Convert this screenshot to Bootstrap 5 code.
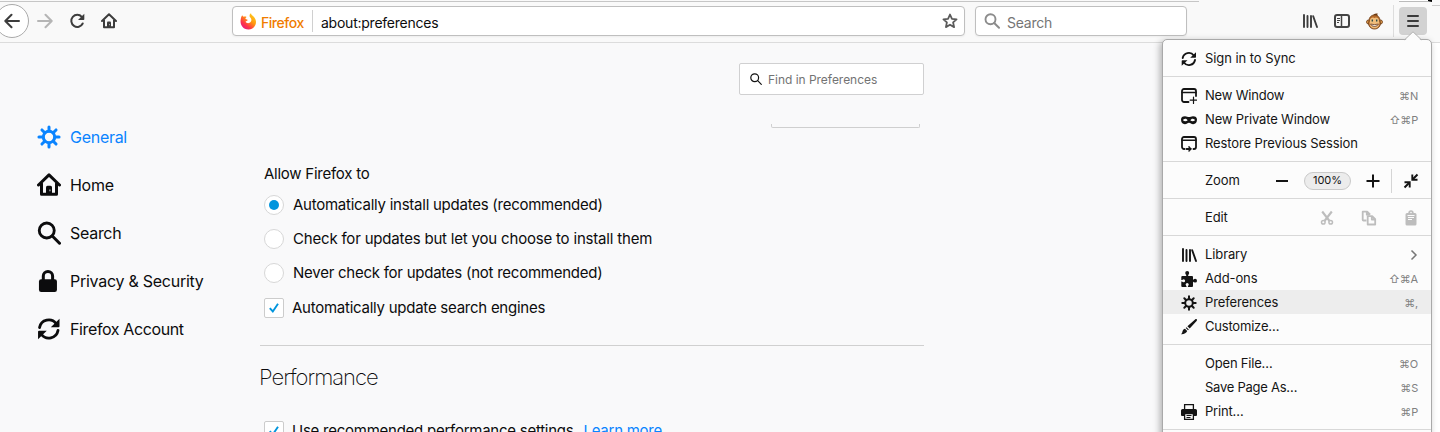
<!DOCTYPE html>
<html lang="en">
<head>
<meta charset="utf-8">
<title>Preferences</title>
<link href="https://cdn.jsdelivr.net/npm/bootstrap@5.3.0/dist/css/bootstrap.min.css" rel="stylesheet">
<script src="https://cdn.jsdelivr.net/npm/bootstrap@5.3.0/dist/js/bootstrap.bundle.min.js"></script>
<style>
html,body{height:432px;overflow:hidden}
body{font-family:Inter,"Liberation Sans",sans-serif;background:#f9f9fa;color:#0c0c0d;position:relative}
svg{display:block;flex:none}
.toolbar{height:43px;background:#f9f9f9;border-bottom:1px solid #dcdcdc;font-size:14px;letter-spacing:-.24px}
.topline{position:absolute;left:0;top:1px;width:1199px;height:1px;background:#c6c6c6}
.tab-end{position:absolute;left:1399px;top:0;width:33px;height:2px;background:#fff;border-bottom:1px solid #bbb;border-right:4px solid #000}
.back{width:34px;height:34px;border:1px solid #aaa;border-radius:50%;background:#fff;margin-left:-5px}
.tool{width:16px;height:16px;margin-left:16px;color:#3d3d3d}
.field{height:30px;background:#fff;border:1px solid #bfbfbf;border-radius:4px;box-shadow:0 1px 2px rgba(0,0,0,.05)}
.field>span{padding-top:2px}
.address{width:733px;margin-left:115px;padding:0 6px 0 7px}
.identity{width:51px;margin-left:4px;color:#f07c00;font-weight:500;letter-spacing:-.46px}
.searchbar{width:212px;margin-left:10px;padding-left:8px;gap:7px;color:#757575}
.menubtn{width:28px;height:28px;border-radius:4px;background:#d2d2d2;color:#3b3b3b}
.side{width:260px;padding:70px 0 0 37px}
.cat{height:48px;font-size:16px;gap:9px;letter-spacing:-.28px}
.cat svg{width:24px;height:24px}
.cat.active{color:#0a84ff}
.main{width:664px;padding-top:20px;font-size:15px;letter-spacing:-.25px}
.find{width:185px;height:32px;border:1px solid #d0d0d1;border-radius:2px;background:#fff;font-size:12px;color:#737373;padding-left:10px;gap:6px;letter-spacing:-.03px}
.stub{width:149px;height:4px;border:1px solid #cfcfcf;border-top:0;border-radius:0 0 2px 2px;margin:29px 4px 0 0}
.opt{height:34px;gap:9px}
.opt.check{gap:8px}
.rad{width:20px;height:20px;border:1px solid #d7d7d7;border-radius:50%;background:#fff}
.rad.on::after{content:"";width:10.5px;height:10.5px;border-radius:50%;background:#0095dd}
.chk{width:20px;height:20px;border:1px solid #ccc;border-radius:2px;background:#fff}
.perf{font-size:22px;font-weight:200;letter-spacing:-1px;margin:15px 0 0 -1px}
.panel{position:absolute;left:1162px;top:39px;width:270px;height:420px;background:#fcfcfc;border:1px solid #a9a9a9;border-radius:5px;font-size:13px;letter-spacing:-.11px;color:#141414;box-shadow:-2px 2px 7px rgba(0,0,0,.3)}
.arrow{position:absolute;left:1402px;top:31px}
.group{padding:6px 0;border-bottom:1px solid #d8d8d8}
.item{height:24px;padding:2px 13px 0 18px;gap:8px}
.item>.ic{margin-top:-1px}
.item.hot{background:#ededed}
.key{font-size:11px;color:#808080;margin-left:auto;letter-spacing:-.2px}
.ic{width:16px;height:16px}
.tools{margin:-1px -1px 0 auto}
.pill{width:47px;height:18px;border:1px solid #c9c9c9;border-radius:9px;background:#ececec;font-size:11px;letter-spacing:-.1px}
.edge{position:absolute;left:1432px;top:5px;width:8px;height:427px;background:linear-gradient(#f9f9f9 0 36px,#fff 36px);border-top:1px solid #ccc}
.edge::before{content:"";display:block;height:1px;margin-top:36px;background:#dcdcdc}
</style>
</head>
<body>
<svg width="0" height="0" class="position-absolute"><defs>
<symbol id="sync" viewBox="0 0 16 16"><path d="M1.700 7A6.200 6.200 0 0 1 12.800 4.500M14 9A6.200 6.200 0 0 1 2.900 11.500" fill="none" stroke="currentColor" stroke-width="1.900" stroke-linecap="round"/><path d="M15 1.200v4.900a.7.7 0 0 1-.7.7H9.200zM.7 14.800V9.900a.7.7 0 0 1 .7-.7h5.100z" fill="currentColor"/></symbol>
<symbol id="house" viewBox="0 0 16 16"><path d="M1 8l7-6.700L15 8M3 7v7.200h10V7" fill="none" stroke="currentColor" stroke-width="2" stroke-linejoin="round" stroke-linecap="round"/><path d="M6 14V9.500a1 1 0 0 1 1-1h2a1 1 0 0 1 1 1V14z" fill="currentColor"/><path d="M8.200 11h.8v1.200h-.8z" fill="#bbb"/></symbol>
<symbol id="lens" viewBox="0 0 16 16"><circle cx="6.500" cy="6.300" r="5" fill="none" stroke="currentColor" stroke-width="1.900"/><path d="M10.200 10l4.800 4.800" stroke="currentColor" stroke-width="2" stroke-linecap="round"/></symbol>
<symbol id="gear" viewBox="0 0 16 16"><circle cx="8" cy="8" r="3.800" fill="none" stroke="currentColor" stroke-width="2"/><path d="M8 1.300v2.700M8 12v2.700M1.300 8h2.700M12 8h2.700M3.300 3.300l1.700 1.700M11 11l1.700 1.700M3.300 12.700L5 11M11 5l1.700-1.700" stroke="currentColor" stroke-width="2" stroke-linecap="round"/></symbol>
<symbol id="books" viewBox="0 0 16 16"><path d="M2 2v12M5.500 3v11M9 3v11M11.200 3.200l3.800 10.800" stroke="currentColor" stroke-width="1.900" stroke-linecap="round" fill="none"/></symbol>
<symbol id="tick" viewBox="0 0 18 18"><path d="M4.800 9.200l3 3.300 5.200-7.800" fill="none" stroke="#0095dd" stroke-width="1.900"/></symbol>
</defs></svg>

<nav class="toolbar d-flex align-items-center">
 <div class="back d-flex align-items-center justify-content-center"><svg width="16" height="16" viewBox="0 0 16 16" fill="none" stroke="#3d3d3d" stroke-width="2" stroke-linecap="round" stroke-linejoin="round"><path d="M15 8H1.500M7.500 1.800L1.300 8l6.200 6.200"/></svg></div>
 <svg class="ms-2" width="16" height="16" viewBox="0 0 16 16" fill="none" stroke="#b5b5b5" stroke-width="2" stroke-linecap="round" stroke-linejoin="round"><path d="M1 8h13.500M8.500 1.800L14.700 8l-6.200 6.200"/></svg>
 <svg class="tool" viewBox="0 0 16 16"><path d="M12.800 3.900A6 6 0 1 0 13.700 10.500" fill="none" stroke="#3d3d3d" stroke-width="2" stroke-linecap="round"/><path d="M15.300.8v5.500a.7.7 0 0 1-.7.7H9z" fill="#3d3d3d"/></svg>
 <svg class="tool"><use href="#house"/></svg>
 <div class="field address d-flex align-items-center">
  <svg width="17" height="17" viewBox="0 0 17 17"><defs><linearGradient id="fx" x1="1" y1="0" x2=".2" y2="1"><stop offset="0" stop-color="#ffe226"/><stop offset=".45" stop-color="#ff980e"/><stop offset=".75" stop-color="#ff3647"/><stop offset="1" stop-color="#e31587"/></linearGradient></defs><path d="M2.200 2.200c.3.900.9 1.400 1.600 1.600.9-.4 2-.3 2.800.2-.9.500-1.300 1.200-1 2.100 1 .3 2 .4 2.200 1-.4 1-1.600 1-2.200 1.500.5 1.500 2.400 2 4 1.200 2.300-1.300 2.400-4 .3-5.800C9.200 2.700 9.600 1 11 .3c.2 1.700 1.700 2.500 3 3.700 4 4.300 1.800 12-5.200 12.500C2.300 16.700-.2 11 .7 6.500c.2-1.600.6-3 1.500-4.300z" fill="url(#fx)"/></svg>
  <span class="identity">Firefox</span>
  <div style="width:1px;height:22px;background:#d0d0d0;margin-right:8px"></div>
  <span>about:preferences</span>
  <svg class="ms-auto" width="16" height="16" viewBox="0 0 16 16"><path d="M8 1.500l1.950 4.300 4.600.5-3.450 3.100 1 4.700L8 11.700l-4.100 2.400 1-4.700L1.450 6.300l4.600-.5z" fill="none" stroke="#5a5a5a" stroke-width="1.800" stroke-linejoin="round"/></svg>
 </div>
 <div class="field searchbar d-flex align-items-center"><svg width="16" height="16" style="color:#8c8c8c"><use href="#lens"/></svg><span>Search</span></div>
 <svg class="tool" style="margin-left:115px"><use href="#books"/></svg>
 <svg class="tool" viewBox="0 0 16 16" fill="none" stroke="#444"><rect x="1" y="2" width="14" height="12" rx="2" stroke-width="2"/><path d="M7.500 2v12" stroke-width="1.500"/><path d="M3 5.500h3M3 7.500h3M3 9.500h2" stroke-width="1"/></svg>
 <svg style="margin-left:16px" width="17" height="17" viewBox="0 0 17 17"><path d="M7 3C7 1 9.500 0 12 .8 11 1 11 1.500 12 2.500z" fill="#6b3a12"/><circle cx="2.500" cy="9" r="2" fill="#dd9a4e" stroke="#6b3a12" stroke-width=".8"/><circle cx="14.500" cy="9" r="2" fill="#dd9a4e" stroke="#6b3a12" stroke-width=".8"/><path d="M8.500 2C12 2 14 4.500 14 8c1.500 4-1 8-5.500 8S1.500 12 3 8c0-3.500 2-6 5.500-6z" fill="#b56a2a" stroke="#6b3a12" stroke-width=".8"/><path d="M8.500 5C10 3.500 13.500 5 13 8.500c1.300 3-.7 6.800-4.500 6.800s-5.800-3.800-4.500-6.800C3.500 5 7 3.500 8.500 5z" fill="#f0be7c"/><path d="M6.300 6.500v2M10.700 6.500v2" stroke="#2d4b45" stroke-width="1.400"/><path d="M4.500 11q4 1.300 8 0-1 2.500-4 2.500T4.500 11z" fill="#f3efe6" stroke="#5a2a12" stroke-width=".7"/></svg>
 <div style="width:1px;height:32px;background:#ddd;margin:0 5px 0 10px"></div>
 <div class="menubtn d-flex align-items-center justify-content-center"><svg width="14" height="14" viewBox="0 0 14 14" stroke="currentColor" stroke-width="2" stroke-linecap="round"><path d="M2 2h10M2 7h10M2 12h10"/></svg></div>
</nav>
<div class="topline"></div>
<div class="tab-end"></div>

<div class="d-flex">
 <aside class="side">
  <div class="cat active d-flex align-items-center"><svg><use href="#gear"/></svg><span>General</span></div>
  <div class="cat d-flex align-items-center"><svg><use href="#house"/></svg><span>Home</span></div>
  <div class="cat d-flex align-items-center"><svg><use href="#lens"/></svg><span>Search</span></div>
  <div class="cat d-flex align-items-center"><svg viewBox="0 0 16 16"><path d="M4.200 8V4.700a3.100 3.100 0 0 1 6.200 0V8" fill="none" stroke="currentColor" stroke-width="2"/><rect x="1.300" y="6.900" width="12" height="8.400" rx="1.500" fill="currentColor"/></svg><span style="letter-spacing:-.26px">Privacy &amp; Security</span></div>
  <div class="cat d-flex align-items-center"><svg><use href="#sync"/></svg><span style="letter-spacing:-.38px">Firefox Account</span></div>
 </aside>
 <main class="main">
  <div class="find d-flex align-items-center ms-auto"><svg width="12" height="12" viewBox="0 0 12 12" fill="none" stroke="#111" stroke-width="1.200" stroke-linecap="round"><circle cx="4.700" cy="4.700" r="3.900"/><path d="M7.700 7.700l3.600 3.600"/></svg><span style="padding-top:1px">Find in Preferences</span></div>
  <div class="stub ms-auto"></div>
  <div class="d-flex align-items-center" style="margin-top:34px;height:24px;padding-left:4px">Allow Firefox to</div>
  <div style="padding:2px 0 0 4px">
   <div class="opt d-flex align-items-center"><span class="rad on d-flex align-items-center justify-content-center"></span><span>Automatically install updates (recommended)</span></div>
   <div class="opt d-flex align-items-center"><span class="rad"></span><span style="letter-spacing:-.19px">Check for updates but let you choose to install them</span></div>
   <div class="opt d-flex align-items-center"><span class="rad"></span><span>Never check for updates (not recommended)</span></div>
   <div class="opt check d-flex align-items-center" style="margin-top:1px"><span class="chk"><svg width="18" height="18"><use href="#tick"/></svg></span><span>Automatically update search engines</span></div>
  </div>
  <div style="height:1px;background:#d0d0d0;margin-top:20px"></div>
  <div class="perf">Performance</div>
  <div class="opt check d-flex align-items-center" style="padding-left:4px;margin-top:20px"><span class="chk"><svg width="18" height="18"><use href="#tick"/></svg></span><span>Use recommended performance settings</span><span style="color:#0a84ff;margin-left:2px">Learn more</span></div>
 </main>
</div>

<div class="edge"></div>
<div class="panel">
 <div class="group"><div class="item d-flex align-items-center"><svg class="ic"><use href="#sync"/></svg><span style="letter-spacing:-.06px">Sign in to Sync</span></div></div>
 <div class="group">
  <div class="item d-flex align-items-center"><svg class="ic" viewBox="0 0 16 16" fill="none" stroke="currentColor" stroke-linecap="round"><path d="M7.500 14H3a2 2 0 0 1-2-2V3a2 2 0 0 1 2-2h10a2 2 0 0 1 2 2v5" stroke-width="1.800"/><path d="M1 4.500h14" stroke-width="1.500"/><path d="M12.500 9v6.500M9.200 12.200h6.500" stroke-width="1.200"/></svg><span style="letter-spacing:-.2px">New Window</span><span class="key">⌘N</span></div>
  <div class="item d-flex align-items-center"><svg class="ic" viewBox="0 0 16 16"><path fill-rule="evenodd" d="M4 4.200c1.700 0 2.700.8 4 .8s2.300-.8 4-.8c2.600 0 4 1.200 4 3.300 0 2.800-1.500 4.700-3.800 4.700-2 0-2.700-1.400-4.200-1.400s-2.200 1.400-4.200 1.400C1.500 12.200 0 10.300 0 7.500c0-2.100 1.400-3.300 4-3.300zM4.300 6.700C3 6.700 2.200 7.500 2 8.200c.8.700 1.400 1 2.300 1s1.700-.4 2.400-1c-.6-.8-1.300-1.500-2.400-1.500zm7.400 0c-1.100 0-1.800.7-2.400 1.500.7.6 1.500 1 2.400 1s1.500-.3 2.300-1c-.2-.7-1-1.500-2.300-1.500z" fill="currentColor"/></svg><span style="letter-spacing:-.15px">New Private Window</span><span class="key">⇧⌘P</span></div>
  <div class="item d-flex align-items-center"><svg class="ic" viewBox="0 0 16 16" fill="none" stroke="currentColor" stroke-linecap="round" stroke-linejoin="round"><path d="M3.500 13H3a2 2 0 0 1-2-2V3a2 2 0 0 1 2-2h10a2 2 0 0 1 2 2v8a2 2 0 0 1-2 2h-.5" stroke-width="1.800"/><path d="M1 4.300h14" stroke-width="1.500"/><path d="M5.500 13h4" stroke-width="1.800"/><path d="M8 10.300l2.500 2.700L8 15.500z" fill="currentColor" stroke-width=".6"/></svg><span>Restore Previous Session</span></div>
 </div>
 <div class="group"><div class="item d-flex align-items-center"><span class="ic"></span><span>Zoom</span>
  <div class="tools d-flex align-items-center">
   <svg class="ic" viewBox="0 0 16 16"><path d="M2 8h12" stroke="#141414" stroke-width="2"/></svg>
   <span class="pill d-flex align-items-center justify-content-center" style="margin:0 14px">100%</span>
   <svg class="ic" viewBox="0 0 16 16"><path d="M1.500 8h13M8 1.500v13" stroke="#141414" stroke-width="2"/></svg>
   <span style="width:1px;height:24px;background:#d5d5d5;margin:0 11px 0 10px"></span>
   <svg class="ic" viewBox="0 0 16 16"><path d="M14.500 1.500L10 6M1.500 14.500L6 10" stroke="#141414" stroke-width="2"/><path d="M9.300 1.500v5.200h5.200M6.700 14.500V9.300H1.500" fill="none" stroke="#141414" stroke-width="1.900"/></svg>
  </div></div></div>
 <div class="group"><div class="item d-flex align-items-center"><span class="ic"></span><span>Edit</span>
  <div class="tools d-flex align-items-center" style="gap:26px;color:#bdbdbd">
   <svg class="ic" viewBox="0 0 16 16" fill="none" stroke="currentColor"><path d="M3.200 1.500L10.500 11M12.800 1.500L5.500 11" stroke-width="2.100"/><circle cx="4.300" cy="12.300" r="1.800" stroke-width="1.500"/><circle cx="11.700" cy="12.300" r="1.800" stroke-width="1.500"/></svg>
   <svg class="ic" viewBox="0 0 16 16" fill="none" stroke="currentColor" stroke-width="1.800" stroke-linejoin="round"><path d="M5.500 10.500h-3a.8.8 0 0 1-.8-.8V1.700h4.500l3 3M5.800 1.700v3h3"/><path d="M6.700 6.200h4.500l3 3v5.300H6.700zM10.800 6.200v3.300h3.400"/></svg>
   <svg class="ic" viewBox="0 0 16 16"><path d="M4 3h1.300a2.700 2.700 0 0 1 5.400 0H12a1.500 1.500 0 0 1 1.500 1.500V14a1.500 1.500 0 0 1-1.500 1.500H4A1.500 1.500 0 0 1 2.500 14V4.500A1.500 1.500 0 0 1 4 3z" fill="currentColor"/><path d="M4.500 5.500h7M5 7.500h6M5 9.500h4" stroke="#fcfcfc" stroke-width="1"/><circle cx="8" cy="2.500" r=".8" fill="#fcfcfc"/></svg>
  </div></div></div>
 <div class="group">
  <div class="item d-flex align-items-center"><svg class="ic"><use href="#books"/></svg><span>Library</span><svg class="ms-auto" width="8" height="12" viewBox="0 0 8 12"><path d="M1.500 1.500L6 6l-4.500 4.500" fill="none" stroke="#777" stroke-width="1.500"/></svg></div>
  <div class="item d-flex align-items-center"><svg class="ic" viewBox="0 0 16 16" fill="currentColor"><rect x=".3" y="5" width="11.700" height="11" rx="1"/><circle cx="6.200" cy="2.100" r="2"/><path d="M5.200 3h2v3h-2zM11 8.700h4v2h-4z"/><circle cx="14.100" cy="9.700" r="1.900"/><g fill="#fcfcfc"><circle cx="2.600" cy="9.700" r="1.500"/><path d="M0 9h2v1.400H0zM5.500 14h1.400v2H5.500z"/><circle cx="6.200" cy="13.500" r="1.500"/></g></svg><span>Add-ons</span><span class="key">⇧⌘A</span></div>
  <div class="item hot d-flex align-items-center"><svg class="ic"><use href="#gear"/></svg><span>Preferences</span><span class="key">⌘,</span></div>
  <div class="item d-flex align-items-center"><svg class="ic" viewBox="0 0 16 16" fill="currentColor"><path d="M15.700.3c.5.500.3 1.100-.1 1.600L8.700 9.600 6.400 7.300 14.100.4c.5-.4 1.200-.6 1.600-.1zM5.500 8.200l2.300 2.300-.8.8L4.700 9zM4 9.800l2.200 2.300C5.500 14.200 3 15.500 0 15.300c1.300-.7 1.200-1.800 1.600-3.200.4-1.300 1.200-2 2.400-2.300z"/></svg><span style="letter-spacing:-.2px">Customize…</span></div>
 </div>
 <div class="group">
  <div class="item d-flex align-items-center"><span class="ic"></span><span style="letter-spacing:-.2px">Open File…</span><span class="key">⌘O</span></div>
  <div class="item d-flex align-items-center"><span class="ic"></span><span style="letter-spacing:-.26px">Save Page As…</span><span class="key">⌘S</span></div>
  <div class="item d-flex align-items-center"><svg class="ic" viewBox="0 0 16 16"><path d="M3.600 6V.7h8.800V6" fill="#fcfcfc" stroke="currentColor" stroke-width="1.300"/><path d="M1.500 5h13A1.500 1.500 0 0 1 16 6.500V11a1 1 0 0 1-1 1H1a1 1 0 0 1-1-1V6.500A1.500 1.500 0 0 1 1.500 5z" fill="currentColor"/><path d="M3.600 9.600h8.800v5.700H3.600z" fill="#fcfcfc" stroke="currentColor" stroke-width="1.300"/><path d="M5.500 11.500h5M5.500 13.500h4" stroke="currentColor"/></svg><span style="letter-spacing:-.2px">Print…</span><span class="key">⌘P</span></div>
 </div>
</div>
<svg class="arrow" width="22" height="10" viewBox="0 0 22 10"><path d="M1 9.500h2L11 1l8 8.500h2V10H1z" fill="#fcfcfc"/><path d="M2.500 8.800L11 .8l8.500 8" fill="none" stroke="#b5b5b5" stroke-width="1"/></svg>
</body>
</html>
